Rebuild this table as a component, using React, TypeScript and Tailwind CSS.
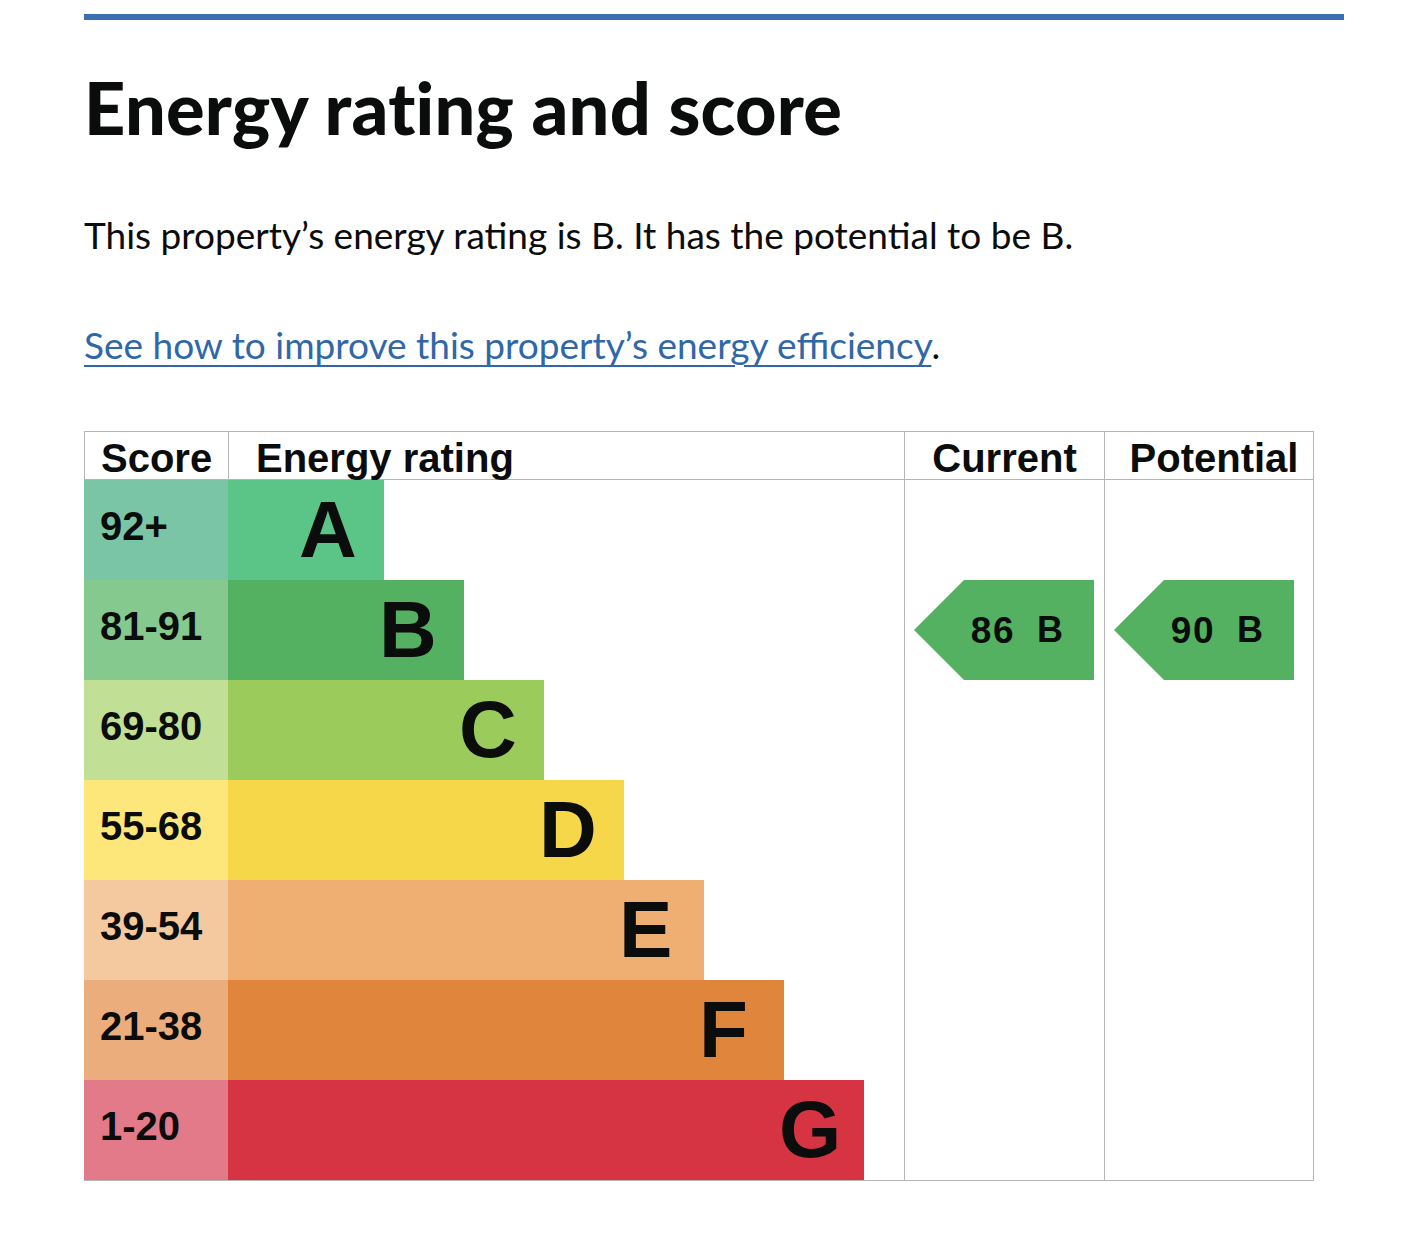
import React from 'react'

type Band = {
  letter: string
  range: string
  width: number
  scoreBg: string
  barBg: string
}

const BANDS: Band[] = [
  { letter: 'A', range: '92+', width: 156, scoreBg: 'bg-[#7ac5a5]', barBg: 'bg-[#5bc587]' },
  { letter: 'B', range: '81-91', width: 236, scoreBg: 'bg-[#86c98f]', barBg: 'bg-[#54b162]' },
  { letter: 'C', range: '69-80', width: 316, scoreBg: 'bg-[#c1df95]', barBg: 'bg-[#9bcc5b]' },
  { letter: 'D', range: '55-68', width: 396, scoreBg: 'bg-[#fde77b]', barBg: 'bg-[#f7d74a]' },
  { letter: 'E', range: '39-54', width: 476, scoreBg: 'bg-[#f5c9a0]', barBg: 'bg-[#efae72]' },
  { letter: 'F', range: '21-38', width: 556, scoreBg: 'bg-[#ebad7c]', barBg: 'bg-[#e0853c]' },
  { letter: 'G', range: '1-20', width: 636, scoreBg: 'bg-[#e27a8a]', barBg: 'bg-[#d63443]' },
]

const chartFont = "font-['Liberation_Sans',Arial,sans-serif]"

function RatingArrow({ score, letter }: { score: number; letter: string }) {
  return (
    <div className="ml-[9px] mt-[100px] flex h-[100px] w-[180px] items-center justify-end gap-[22px] bg-[#54b162] pr-[31px] [clip-path:polygon(50px_0,100%_0,100%_100%,50px_100%,0_50%)]">
      <span className="text-[37px] font-bold leading-none tracking-[1.5px] text-[#0b0c0c]">{score}</span>
      <span className="text-[36px] font-bold leading-none text-[#0b0c0c]">{letter}</span>
    </div>
  )
}

export default function App() {
  return (
    <div className="min-h-[1256px] bg-white pt-[14px]">
      <div className="ml-[84px] w-[1260px] border-t-[6px] border-[#3a6fb1] font-['Lato',sans-serif] text-[#0b0c0c]">
        {/* Heading */}
        <h1 className="mt-[51px] text-[72px] font-black leading-none tracking-[0.25px]">Energy rating and score</h1>

        <p className="mt-[73px] text-[37px] leading-none">
          This property’s energy rating is B. It has the potential to be B.
        </p>

        <p className="mt-[73px] text-[37px] leading-none">
          <a
            href="#"
            className="text-[#2f67a8] underline decoration-2 underline-offset-[6px]"
          >
            See how to improve this property’s energy efficiency
          </a>
          .
        </p>

        {/* Chart */}
        <div className={`mt-[68px] w-[1230px] ${chartFont}`}>
          <div className="flex h-[49px] border border-[#b5b5b5] text-[40px] font-bold leading-none">
            <div className="w-[144px] shrink-0 border-r border-[#b5b5b5] pl-4 pt-[6px]">Score</div>
            <div className="w-[676px] shrink-0 border-r border-[#b5b5b5] pl-[27px] pt-[6px]">Energy rating</div>
            <div className="w-[200px] shrink-0 border-r border-[#b5b5b5] pt-[6px] text-center">Current</div>
            <div className="flex-1 pl-[10px] pt-[6px] text-center">Potential</div>
          </div>

          <div className="flex border-r border-b border-[#b5b5b5]">
            <div className="flex w-[820px] shrink-0 flex-col">
              {BANDS.map((b) => (
                <div key={b.letter} className="flex h-[100px]">
                  <div className={`flex w-[144px] shrink-0 items-center pb-2 pl-4 text-[40px] font-bold leading-none ${b.scoreBg}`}>
                    {b.range}
                  </div>
                  <div
                    className={`flex items-center justify-end ${b.barBg}`}
                    style={{ width: b.width }}
                  >
                    <span className="w-[85px] text-[80px] font-bold leading-none">{b.letter}</span>
                  </div>
                </div>
              ))}
            </div>
            <div className="w-[200px] shrink-0 border-l border-[#b5b5b5]">
              <RatingArrow score={86} letter="B" />
            </div>
            <div className="flex-1 border-l border-[#b5b5b5]">
              <RatingArrow score={90} letter="B" />
            </div>
          </div>
        </div>
      </div>
    </div>
  )
}
